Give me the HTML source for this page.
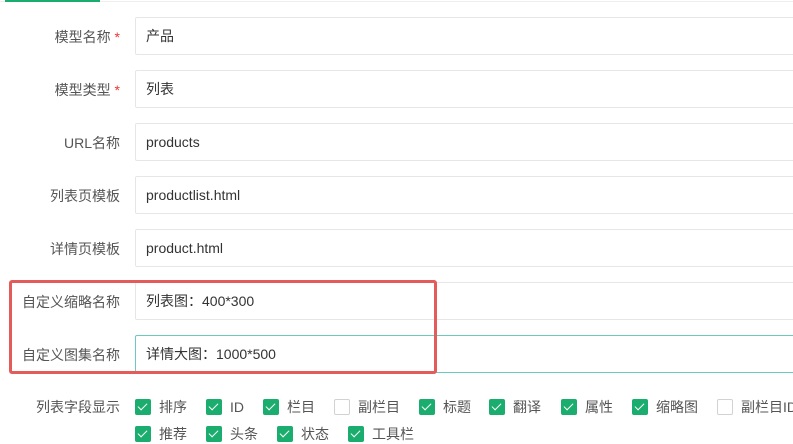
<html><head><style>
body{margin:0;width:793px;height:430px;overflow:hidden;background:#fff;font-family:"Liberation Sans","Noto Sans CJK SC",sans-serif;font-size:14px;position:relative}
.a{position:absolute}
.lbl{position:absolute;right:673px;color:#555;text-align:right;white-space:nowrap;line-height:20px}
.in{position:absolute;left:135px;width:700px;height:36px;border:1px solid #e6e6e6;border-radius:2px;line-height:37px;padding-left:10px;color:#333;box-sizing:content-box}
.star{color:#e33}
.cb{position:absolute;width:16px;height:16px;background:#1aad6e;border-radius:2px}
.cb::after{content:"";position:absolute;left:5px;top:2px;width:4px;height:8px;border:solid #fff;border-width:0 1.5px 1.5px 0;transform:rotate(45deg)}
.cb.off{background:#fff;border:1px solid #d2d2d2;width:14px;height:14px}
.cb.off::after{display:none}
.t{position:absolute;color:#555;line-height:20px;white-space:nowrap}
</style></head><body>
<div class="a" style="left:0;top:1px;width:793px;height:1px;background:#eee"></div>
<div class="a" style="left:5px;top:0;width:95px;height:2px;background:#1aad6e"></div>

<div class="lbl" style="top:27px">模型名称 <span class="star">*</span></div><div class="in" style="top:17px">产品</div>
<div class="lbl" style="top:80px">模型类型 <span class="star">*</span></div><div class="in" style="top:70px">列表</div>
<div class="lbl" style="top:133px">URL名称</div><div class="in" style="top:123px">products</div>
<div class="lbl" style="top:186px">列表页模板</div><div class="in" style="top:176px">productlist.html</div>
<div class="lbl" style="top:239px">详情页模板</div><div class="in" style="top:229px">product.html</div>
<div class="lbl" style="top:292px">自定义缩略名称</div><div class="in" style="top:282px">列表图：400*300</div>
<div class="lbl" style="top:345px">自定义图集名称</div><div class="in" style="top:335px;border-color:#6cc9c0">详情大图：1000*500</div>
<div class="a" style="left:9px;top:280px;width:422px;height:88px;border:3px solid #e35b5b;border-radius:3px"></div>

<div class="lbl" style="top:397px">列表字段显示</div>
<div class="cb" style="left:135px;top:399px"></div><div class="t" style="left:159px;top:397px">排序</div>
<div class="cb" style="left:206px;top:399px"></div><div class="t" style="left:230px;top:397px">ID</div>
<div class="cb" style="left:263px;top:399px"></div><div class="t" style="left:287px;top:397px">栏目</div>
<div class="cb off" style="left:334px;top:399px"></div><div class="t" style="left:358px;top:397px">副栏目</div>
<div class="cb" style="left:419px;top:399px"></div><div class="t" style="left:443px;top:397px">标题</div>
<div class="cb" style="left:489px;top:399px"></div><div class="t" style="left:513px;top:397px">翻译</div>
<div class="cb" style="left:561px;top:399px"></div><div class="t" style="left:585px;top:397px">属性</div>
<div class="cb" style="left:632px;top:399px"></div><div class="t" style="left:656px;top:397px">缩略图</div>
<div class="cb off" style="left:717px;top:399px"></div><div class="t" style="left:741px;top:397px">副栏目ID</div>
<div class="cb" style="left:135px;top:426px"></div><div class="t" style="left:159px;top:424px">推荐</div>
<div class="cb" style="left:206px;top:426px"></div><div class="t" style="left:230px;top:424px">头条</div>
<div class="cb" style="left:277px;top:426px"></div><div class="t" style="left:301px;top:424px">状态</div>
<div class="cb" style="left:348px;top:426px"></div><div class="t" style="left:372px;top:424px">工具栏</div>
</body></html>
